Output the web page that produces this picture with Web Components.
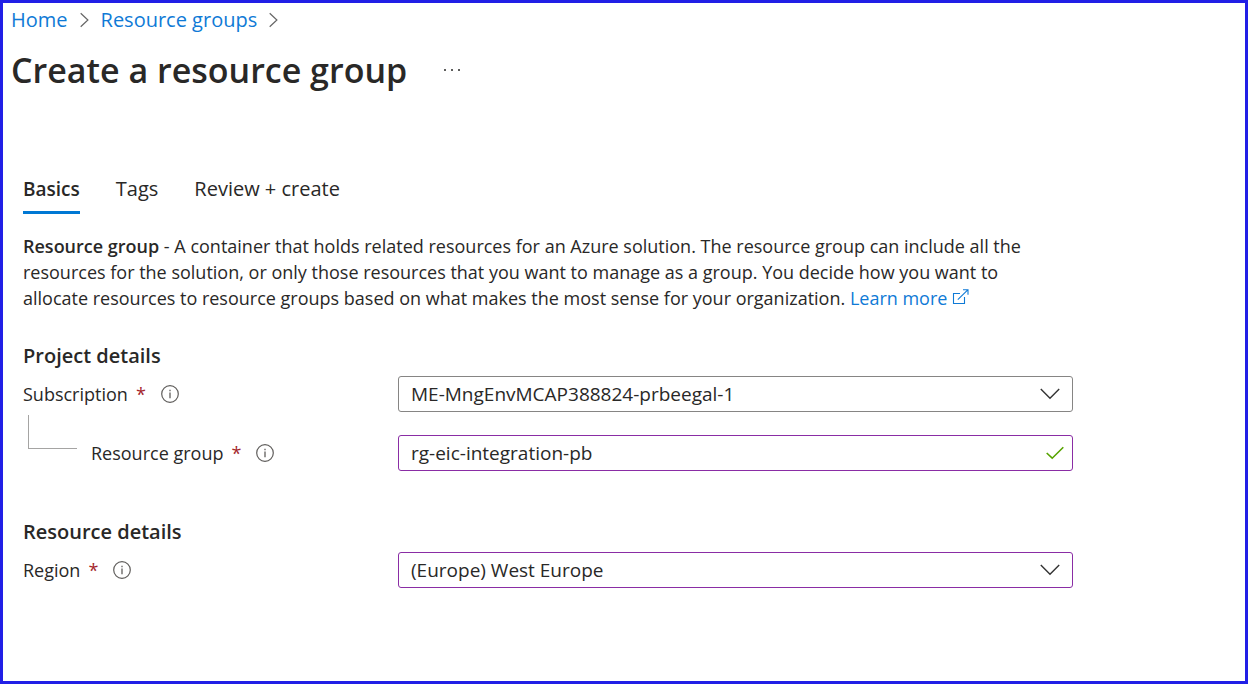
<!DOCTYPE html>
<html lang="en">
<head>
<meta charset="utf-8">
<meta name="viewport" content="width=device-width, initial-scale=1">
<title>Create a resource group</title>
<style>
  html { height: 100%; }
  body {
    box-sizing: border-box;
    min-height: 100%;
    margin: 0;
    border: 3px solid #211fe6;
    background: #fff;
    color: #292827;
    font: 18px/26px "Open Sans", "Noto Sans", sans-serif;
    --link: #0f7ad6;
    --accent: #0078d4;
  }
</style>
</head>
<body>
<portal-page>
  <bread-crumb slot="top">
    <crumb-link href="#home">Home</crumb-link>
    <crumb-link href="#groups">Resource groups</crumb-link>
  </bread-crumb>
  <page-title slot="top">Create a resource group</page-title>
  <tab-strip>
    <tab-item selected>Basics</tab-item>
    <tab-item>Tags</tab-item>
    <tab-item>Review + create</tab-item>
  </tab-strip>
  <intro-text></intro-text>
  <form-section heading="Project details">
    <form-field label="Subscription" type="select" value="ME-MngEnvMCAP388824-prbeegal-1"></form-field>
    <form-field label="Resource group" type="text" value="rg-eic-integration-pb" nested edited></form-field>
  </form-section>
  <form-section heading="Resource details">
    <form-field label="Region" type="select" value="(Europe) West Europe" edited></form-field>
  </form-section>
</portal-page>

<script>
  class Base extends HTMLElement {
    connectedCallback() {
      if (this.shadowRoot) return;
      this.attachShadow({ mode: "open" }).innerHTML = this.render();
    }
  }
  const define = (name, render) =>
    customElements.define(name, class extends Base { render() { return render(this); } });

  define("portal-page", () => `
    <style>
      :host { display: block; }
      header { padding: 0 8px; }
      main { max-width: 1050px; margin: 82px 20px 0; padding-bottom: 48px; }
    </style>
    <header><slot name="top"></slot></header>
    <main><slot></slot></main>`);

  define("bread-crumb", () => `
    <style>
      :host { display: block; }
      nav { display: flex; align-items: center; gap: 12px; height: 34px; }
    </style>
    <nav aria-label="Breadcrumb"><slot></slot></nav>`);

  define("crumb-link", el => `
    <style>
      :host { display: flex; align-items: center; gap: 12px; font-size: 20px; }
      a { color: var(--link); text-decoration: none; }
      svg { display: block; }
    </style>
    <a href="${el.getAttribute("href")}"><slot></slot></a>
    <svg width="9" height="16" viewBox="0 0 9 16" fill="none" stroke="#666" stroke-width="1.2" aria-hidden="true"><path d="M.7 1.2 7.9 8 .7 14.8"/></svg>`);

  define("page-title", () => `
    <style>
      :host { display: flex; align-items: center; gap: 36px; margin-top: 9px; }
      h1 { margin: 0; font-size: 34px; line-height: 48px; font-weight: 600; }
      button { display: flex; padding: 0; border: 0; background: none; }
    </style>
    <h1><slot></slot></h1>
    <button type="button" aria-label="More actions">
      <svg width="18" height="4" viewBox="0 0 18 4" fill="#292827"><circle cx="2" cy="2" r="1"/><circle cx="9" cy="2" r="1"/><circle cx="16" cy="2" r="1"/></svg>
    </button>`);

  define("tab-strip", () => `
    <style>:host { display: flex; gap: 36px; }</style>
    <slot></slot>`);

  define("tab-item", () => `
    <style>
      :host { display: block; font-size: 20px; }
      :host([selected]) { font-size: 19px; }
      button {
        display: block; padding: 0 0 9px; border: 0; border-bottom: 3px solid transparent;
        background: none; color: inherit; font: inherit;
      }
      :host([selected]) button { font-weight: 600; border-color: var(--accent); }
    </style>
    <button type="button"><slot></slot></button>`);

  define("intro-text", () => `
    <style>
      :host { display: block; max-width: 1030px; margin-top: 19px; }
      p { margin: 0; }
      b { font-weight: 600; }
      a { color: var(--link); text-decoration: none; }
    </style>
    <p><b>Resource group</b> - A container that holds related resources for an Azure solution. The resource group can include all the resources for the solution, or only those resources that you want to manage as a group. You decide how you want to allocate resources to resource groups based on what makes the most sense for your organization. <a href="#learn">Learn more
      <svg width="17" height="16" viewBox="0 0 17 16" fill="none" stroke="currentColor" stroke-width="1.1" aria-hidden="true"><path d="M8 4.5H1.5v10h11V8M5.8 10.7 15.8.8M11 .8h5v5"/></svg></a></p>`);

  define("form-section", el => `
    <style>
      :host { display: block; margin-top: 32px; }
      :host(:last-of-type) { margin-top: 48px; }
      h2 { margin: 0 0 7px; font-size: 20px; line-height: 26px; font-weight: 600; }
      div { display: grid; gap: 23px; }
    </style>
    <h2>${el.getAttribute("heading")}</h2>
    <div><slot></slot></div>`);

  define("form-field", el => {
    const value = el.getAttribute("value");
    const control = el.getAttribute("type") === "select"
      ? `<select id="control"><option>${value}</option></select>
         <svg class="chevron" width="20" height="12" viewBox="0 0 20 12" fill="none" stroke="#333" stroke-width="1.4" aria-hidden="true"><path d="M.8 1 10 10.3 19.2 1"/></svg>`
      : `<input id="control" type="text" value="${value}">
         <svg class="check" width="18" height="14" viewBox="0 0 18 14" fill="none" stroke="#57a300" stroke-width="1.6" aria-hidden="true"><path d="M.7 7 6.2 12.2 17.3 1.2"/></svg>`;
    return `
    <style>
      :host { display: grid; grid-template-columns: 375px minmax(0, 1fr); align-items: center; }
      .name { position: relative; display: flex; align-items: center; }
      :host([nested]) .name { padding-left: 68px; }
      :host([nested]) .name::before {
        content: ""; position: absolute; left: 5px; bottom: 17px; width: 48px; height: 33px;
        border: solid #a5a4a3; border-width: 0 0 1px 1px;
      }
      .star { margin-left: 8px; color: #a4262c; }
      .info { display: flex; margin-left: 15px; padding: 0; border: 0; background: none; }
      .box { display: grid; align-items: center; font-size: 19px; }
      .box > * { grid-area: 1 / 1; }
      input, select {
        appearance: none; box-sizing: border-box; width: 100%; height: 36px; margin: 0; padding: 0 44px 0 12px;
        border: 1px solid #868584; border-radius: 3px; background: #fff; color: inherit; font: inherit;
      }
      :host([edited]) :is(input, select) { border-color: #8a2da5; }
      .box svg { justify-self: end; pointer-events: none; }
      .chevron { margin-right: 13px; }
      .check { margin-right: 9px; }
    </style>
    <div class="name">
      <label for="control">${el.getAttribute("label")}</label><span class="star">*</span>
      <button class="info" type="button" aria-label="Info">
        <svg width="18" height="18" viewBox="0 0 18 18" fill="none" stroke="#605e5c"><circle cx="9" cy="9" r="8.3" stroke-width="1.2"/><path d="M9 7.4v5.8M9 4.8v1.4" stroke-width="1.3"/></svg>
      </button>
    </div>
    <div class="box">${control}</div>`;
  });
</script>
</body>
</html>
